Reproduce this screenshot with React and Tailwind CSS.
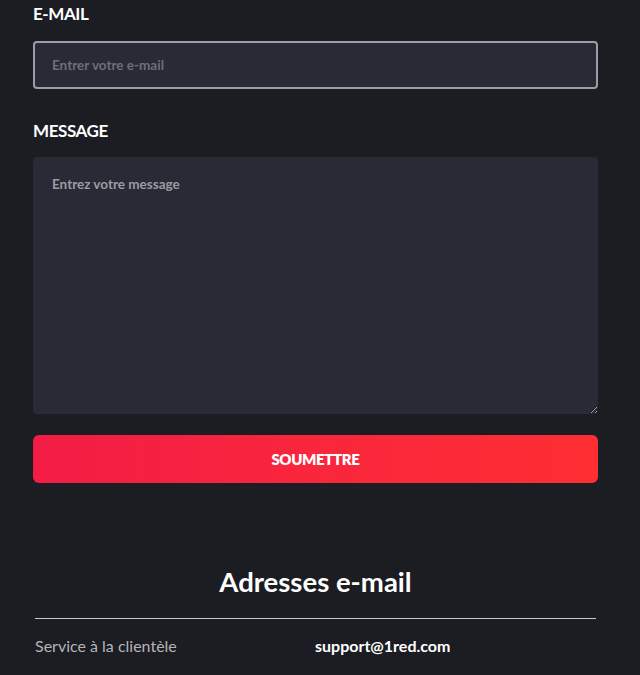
export default function App() {
  return (
    <div className="min-h-[675px] bg-[#1c1d22] font-['Lato',sans-serif] pt-[2px]">
      <form className="ml-[33px] w-[565px] flex flex-col" onSubmit={(e) => e.preventDefault()}>
        <label className="text-white font-bold text-[17px] leading-6 tracking-tight">E-MAIL</label>
        <input
          type="email"
          placeholder="Entrer votre e-mail"
          className="mt-[15px] h-12 w-full rounded-[4px] border-2 border-[#9c9ca4] bg-[#282a36] px-[17px] text-[13.5px] font-bold text-white placeholder:text-[#6e6f78] outline-none"
        />
        <label className="mt-[30px] text-white font-bold text-[17px] leading-6 tracking-tight">MESSAGE</label>
        <textarea
          placeholder="Entrez votre message"
          className="mt-[14px] h-[257px] w-full rounded-[4px] bg-[#282a36] px-[19px] pt-[17px] text-[13.5px] font-bold text-white placeholder:text-[#9c9ca2] outline-none"
        />
        <button
          type="submit"
          className="mt-[21px] h-12 w-full rounded-[6px] bg-gradient-to-r from-[#f31c45] to-[#ff2e32] text-white font-extrabold text-[15px] tracking-tight"
        >
          SOUMETTRE
        </button>
      </form>

      <h2 className="mt-[83px] ml-[33px] w-[565px] text-center text-white font-bold text-[27.5px] leading-8">
        Adresses e-mail
      </h2>
      <div className="mt-[20px] ml-[35px] w-[561px] h-px bg-[#c8c8cc]" />
      <div className="ml-[35px] w-[561px] mt-[16px] grid grid-cols-[280px_1fr] text-[16px] leading-[22px]">
        <span className="text-[#b4b4b8]">Service à la clientèle</span>
        <span className="text-white font-bold">support@1red.com</span>
      </div>
    </div>
  );
}
